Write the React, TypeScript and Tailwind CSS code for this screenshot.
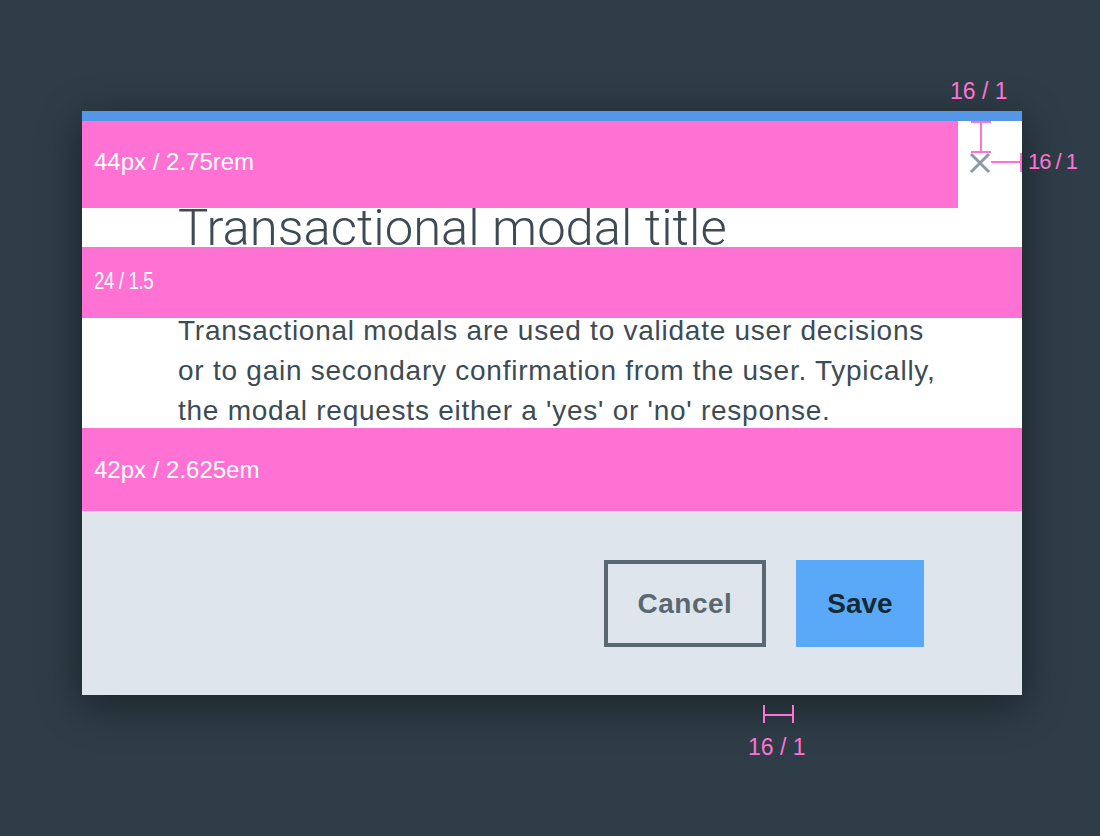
import React from "react";

const pink = "bg-[#ff72d4]";

function Band({ top, height, width, label, narrow, pb }: { top: string; height: string; width: string; label: string; narrow?: boolean; pb?: string }) {
  return (
    <div className={`absolute left-0 ${top} ${height} ${width} ${pink} flex items-center pl-[12px] ${pb ?? ""}`}>
      <span
        className={`text-white text-[24px] leading-none ${narrow ? "inline-block scale-x-[0.78] origin-left tracking-[-0.5px]" : ""}`}
        style={{ fontFamily: '"Liberation Sans", Arial, sans-serif' }}
      >
        {label}
      </span>
    </div>
  );
}

export default function App() {
  const sans = { fontFamily: '"Liberation Sans", Arial, sans-serif' };
  return (
    <div className="relative w-[1100px] h-[836px] bg-[#2e3d47] pt-[111px] pl-[82px] overflow-hidden" style={sans}>
      {/* modal */}
      <div className="relative w-[940px] h-[584px] flex flex-col shadow-[0_10px_40px_rgba(0,0,0,0.45)]">
        <div className="h-[10px] bg-[#5596e6]" />
        <div className="h-[390px] bg-white pl-[96px] pt-[77px]">
          <h1
            className="text-[#3d4b55] text-[50.8px] leading-[60px] font-light"
            style={{ fontFamily: "Roboto, sans-serif" }}
          >
            Transactional modal title
          </h1>
          <p className="mt-[53px] text-[#3d4b55] text-[28px] leading-[40px] tracking-[0.75px] w-[770px]">
            Transactional modals are used to validate user decisions or to gain secondary confirmation from the user. Typically, the modal requests either a 'yes' or 'no' response.
          </p>
        </div>
        <div className="flex-1 bg-[#dfe5ec] flex justify-end items-start pt-[49px] pr-[98px] gap-[30px]">
          <button className="w-[162px] h-[87px] border-[4px] border-[#5a6872] text-[#5a6872] text-[28px] font-bold tracking-[0.5px]">
            Cancel
          </button>
          <button className="w-[128px] h-[87px] bg-[#5aa9f9] text-[#152935] text-[28px] font-bold">
            Save
          </button>
        </div>

        {/* spec overlays */}
        <Band top="top-[10px]" height="h-[87px]" width="w-[876px]" label="44px / 2.75rem" pb="pb-[6px]" />
        <Band top="top-[136px]" height="h-[71px]" width="w-[940px]" label="24 / 1.5" narrow pb="pb-[4px]" />
        <Band top="top-[317px]" height="h-[83px]" width="w-[940px]" label="42px / 2.625em" />

        {/* close */}
        <svg className="absolute left-[887px] top-[41px]" width="22" height="22" viewBox="0 0 22 22">
          <path d="M2 2 L20 20 M20 2 L2 20" stroke="#8c9ba5" strokeWidth="3" />
        </svg>
      </div>

      {/* dimension marks around close */}
      <svg className="absolute left-[960px] top-[115px]" width="70" height="70" viewBox="0 0 70 70">
        <g stroke="#ff72d4" strokeWidth="2" fill="none">
          <path d="M11 7 H31 M21 7 V37 M11 37 H31" />
          <path d="M31 47 H61 M61 38 V57" />
        </g>
      </svg>

      {/* outside labels */}
      <span className="absolute left-[950px] top-[80px] text-[#ff72d4] text-[23px] leading-none">16 / 1</span>
      <span className="absolute left-[1028px] top-[151px] text-[#ff72d4] text-[22px] leading-none tracking-[-1px]">16 / 1</span>
      <svg className="absolute left-[762px] top-[704px]" width="34" height="22" viewBox="0 0 34 22">
        <path d="M2 1 V19 M2 11 H31 M31 1 V19" stroke="#ff72d4" strokeWidth="2" fill="none" />
      </svg>
      <span className="absolute left-[748px] top-[736px] text-[#ff72d4] text-[23px] leading-none">16 / 1</span>
    </div>
  );
}
